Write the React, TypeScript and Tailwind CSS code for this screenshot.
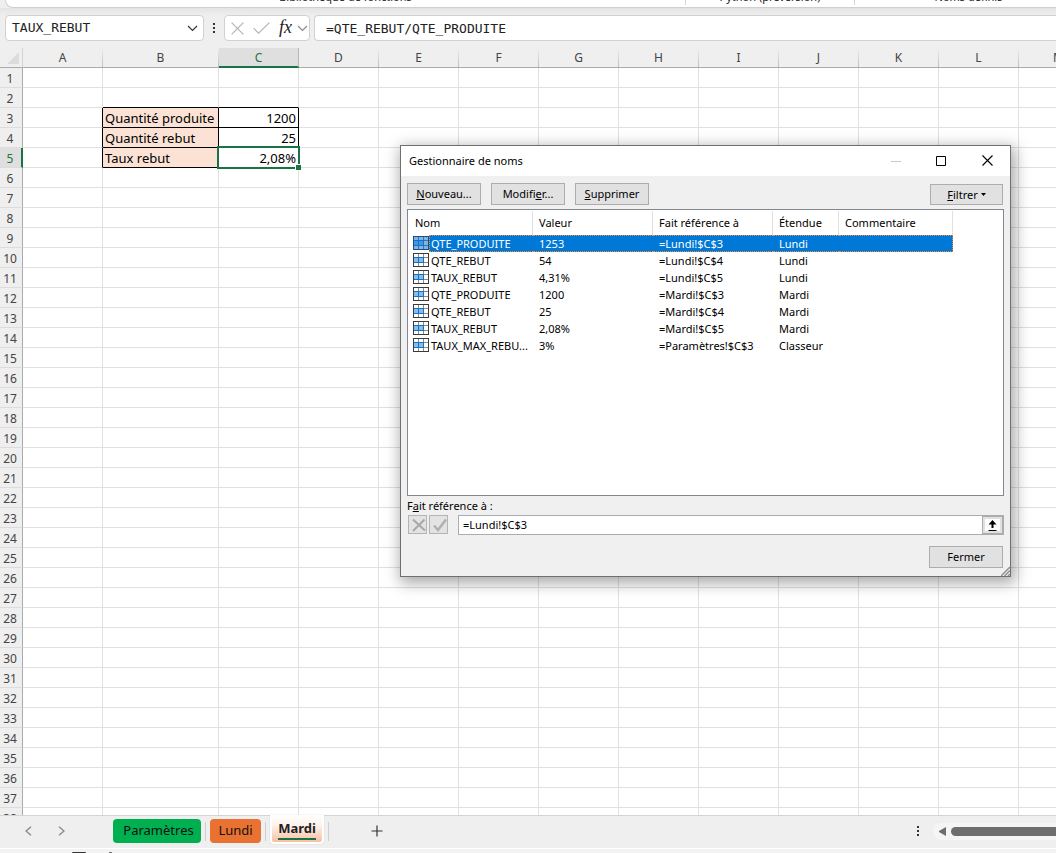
import { useState } from "react";

const columns = [
  { name: "A", width: "w-[80px]" },
  { name: "B", width: "w-[116px]" },
  { name: "C", width: "w-[80px]" },
  ..."DEFGHIJKLM".split("").map((name) => ({ name, width: "w-[80px]" })),
];

const rows = Array.from({ length: 40 }, (_, i) => i + 1);

const cells: Record<string, string> = {
  B3: "Quantité produite",
  C3: "1200",
  B4: "Quantité rebut",
  C4: "25",
  B5: "Taux rebut",
  C5: "2,08%",
};

const names = [
  { nom: "QTE_PRODUITE", valeur: "1253", ref: "=Lundi!$C$3", etendue: "Lundi" },
  { nom: "QTE_REBUT", valeur: "54", ref: "=Lundi!$C$4", etendue: "Lundi" },
  { nom: "TAUX_REBUT", valeur: "4,31%", ref: "=Lundi!$C$5", etendue: "Lundi" },
  { nom: "QTE_PRODUITE", valeur: "1200", ref: "=Mardi!$C$3", etendue: "Mardi" },
  { nom: "QTE_REBUT", valeur: "25", ref: "=Mardi!$C$4", etendue: "Mardi" },
  { nom: "TAUX_REBUT", valeur: "2,08%", ref: "=Mardi!$C$5", etendue: "Mardi" },
  { nom: "TAUX_MAX_REBU...", valeur: "3%", ref: "=Paramètres!$C$3", etendue: "Classeur" },
];

function Chevron({ className = "" }: { className?: string }) {
  return (
    <svg width="11" height="7" viewBox="0 0 11 7" fill="none" stroke="currentColor" strokeWidth="1.2" className={className} aria-hidden="true">
      <path d="M1 1l4.5 4.5L10 1" />
    </svg>
  );
}

function Dots() {
  return (
    <svg width="2" height="10" viewBox="0 0 2 10" fill="#333" shapeRendering="crispEdges" aria-hidden="true">
      <path d="M0 0h2v2H0zM0 4h2v2H0zM0 8h2v2H0z" />
    </svg>
  );
}

function Ribbon() {
  return (
    <div className="ml-[5px] flex h-[8px] shrink-0 items-end overflow-hidden rounded-bl-lg border-b border-l border-[#cfcfcf] bg-white pb-[2px] text-[11px] leading-4 text-[#222]">
      <div className="w-[679px] shrink-0 text-center">Bibliothèque de fonctions</div>
      <div className="w-[170px] shrink-0 border-x border-[#d6d6d6] text-center">Python (préversion)</div>
      <div className="w-[227px] shrink-0 text-center">Noms définis</div>
    </div>
  );
}

function FormulaBar() {
  return (
    <div className="flex h-[40px] shrink-0 items-center bg-gradient-to-b from-[#e4e4e4] via-[#efefef] via-20% to-[#efefef] pl-[5px] font-['DejaVu_Sans_Mono',monospace] text-[13px]">
      <div className="flex h-[26px] w-[199px] items-center rounded border border-[#d1d1d1] bg-white pr-[5px] pl-[6px]">
        <input aria-label="Zone de nom" defaultValue="TAUX_REBUT" className="min-w-0 flex-1 text-[#222] outline-none" />
        <button type="button" aria-label="Ouvrir la liste des noms" className="text-[#333]">
          <Chevron />
        </button>
      </div>
      <div className="flex w-[20px] justify-center">
        <Dots />
      </div>
      <div className="flex h-[26px] w-[86px] items-center rounded border border-[#d1d1d1] bg-white pr-px pl-[6px]">
        <button type="button" aria-label="Annuler" className="text-[#b4b4b4]">
          <svg width="13" height="13" viewBox="0 0 13 13" fill="none" stroke="currentColor" strokeWidth="1.2">
            <path d="M.6.6l11.8 11.8M12.4.6L.6 12.4" />
          </svg>
        </button>
        <button type="button" aria-label="Entrer" className="ml-[9px] text-[#b4b4b4]">
          <svg width="17" height="12" viewBox="0 0 17 12" fill="none" stroke="currentColor" strokeWidth="1.2">
            <path d="M.6 6.2l5 5L16.4.6" />
          </svg>
        </button>
        <button type="button" aria-label="Insérer une fonction" className="ml-[9px] pb-[2px] font-['Liberation_Serif',serif] text-lg leading-5 text-[#222] italic">
          fx
        </button>
        <button type="button" aria-label="Options de fonction" className="ml-auto text-[#8a8a8a]">
          <Chevron />
        </button>
      </div>
      <input
        aria-label="Barre de formule"
        defaultValue="=QTE_REBUT/QTE_PRODUITE"
        className="ml-[4px] h-[26px] min-w-0 flex-1 rounded-l border border-r-0 border-[#d1d1d1] bg-white pl-[11px] text-[#222] outline-none"
      />
    </div>
  );
}

function cellStyle(id: string) {
  const black = "border-black bg-clip-padding";
  switch (id) {
    case "B2":
    case "C2":
      return "border-r-[#e0e0e0] border-b-black";
    case "A3":
    case "A4":
    case "A5":
      return "border-r-black border-b-[#e0e0e0]";
    case "B3":
    case "B4":
    case "B5":
      return `${black} bg-[#fbe2d5] pl-[2px]`;
    case "C3":
    case "C4":
      return `${black} pr-[2px] text-right`;
    case "C5":
      return `${black} relative z-10 pr-[2px] text-right`;
    default:
      return "border-[#e0e0e0]";
  }
}

function Sheet() {
  return (
    <div className="min-h-0 flex-1 overflow-hidden bg-white">
      <table className="w-[1099px] table-fixed border-separate border-spacing-0 text-xs leading-5">
        <thead>
          <tr className="h-[20px]">
            <th className="h-[20px] w-[23px] border-r border-b border-r-[#d4d4d4] border-b-[#ababab] bg-[#efefef] p-0">
              <svg width="12" height="12" viewBox="0 0 12 12" className="ml-[7px]" aria-hidden="true">
                <path d="M12 0v12H0z" fill="#dcdcdc" />
              </svg>
            </th>
            {columns.map((c) => (
              <th
                key={c.name}
                scope="col"
                className={`${c.width} p-0 font-normal ${
                  c.name === "C" ? "border-r border-b-2 border-r-[#b5b5b5] border-b-[#1a7343] bg-[#dfdfdf] text-[#217346]" : "border-b border-[#ababab] bg-[#efefef] text-[#444]"
                }`}
              >
                <div className={c.name === "C" ? "h-[18px]" : "flex h-[19px]"}>
                  <span className="flex-1">{c.name}</span>
                  {c.name !== "C" && <span className="w-px bg-gradient-to-b from-[#efefef] to-[#bdbdbd]" />}
                </div>
              </th>
            ))}
          </tr>
        </thead>
        <tbody>
          {rows.map((r) => (
            <tr key={r} className="h-[20px]">
              <th
                scope="row"
                className={`h-[20px] border-b border-[#dcdcdc] p-0 text-center font-normal ${
                  r === 5 ? "border-r-2 border-r-[#1a7343] bg-[#dfdfdf] text-[#217346]" : "border-r border-r-[#ababab] bg-[#efefef] pr-px text-[#444]"
                }`}
              >
                <span className="block h-[19px] pr-px leading-[22px]">{r}</span>
              </th>
              {columns.map((c) => {
                const id = c.name + r;
                return (
                  <td key={c.name} className={`border-r border-b p-0 text-[13px] text-black ${cellStyle(id)}`}>
                    {cells[id] && <span className="block h-[19px] leading-[20px] whitespace-nowrap">{cells[id]}</span>}
                    {id === "C5" && (
                      <span className="absolute -inset-[2px] border-2 border-[#1a7343]">
                        <span className="absolute -right-[3px] -bottom-[3px] size-[6px] border-t border-l border-white bg-[#1a7343]" />
                      </span>
                    )}
                  </td>
                );
              })}
            </tr>
          ))}
        </tbody>
      </table>
    </div>
  );
}

function SheetTabs() {
  return (
    <div className="flex h-[33px] shrink-0 items-start border-t border-[#d4d4d4] bg-[#efefef] text-[13px]">
      <div className="flex h-[30px] w-[113px] shrink-0 items-center gap-[26px] pl-[25px] text-[#8a8a8a]">
        <button type="button" aria-label="Feuille précédente">
          <svg width="7" height="10" viewBox="0 0 7 10" fill="none" stroke="currentColor" strokeWidth="1.4"><path d="M6 .7L1 5l5 4.3" /></svg>
        </button>
        <button type="button" aria-label="Feuille suivante">
          <svg width="7" height="10" viewBox="0 0 7 10" fill="none" stroke="currentColor" strokeWidth="1.4"><path d="M1 .7L6 5 1 9.3" /></svg>
        </button>
      </div>
      <button type="button" className="mt-[3px] h-[24px] w-[88px] rounded bg-[#00b050] pl-[3px] text-[#111]">Paramètres</button>
      <span className="mx-[4px] mt-[6px] h-[19px] w-px bg-[#cfcfcf]" />
      <button type="button" className="mt-[3px] h-[24px] w-[51px] rounded bg-[#e97132] text-[#111]">Lundi</button>
      <span className="mx-[4px] mt-[6px] h-[19px] w-px bg-[#cfcfcf]" />
      <button type="button" className="-mt-px h-[29px] w-[54px] rounded-b border-2 border-t-0 border-white bg-gradient-to-b from-white via-[#fdf1ea] via-40% to-[#f6bfa2] px-[6px] font-bold text-[#222] shadow-[0_0_1px_#aaa]">
        <span className="block border-b-2 border-[#1a7343] leading-[20px]">Mardi</span>
      </button>
      <span className="mt-[6px] ml-[4px] h-[19px] w-px bg-[#cfcfcf]" />
      <button type="button" aria-label="Nouvelle feuille" className="mt-[9px] ml-[42px]">
        <svg width="12" height="12" viewBox="0 0 12 12" stroke="#333" strokeWidth="1.2"><path d="M6 .5v11M.5 6h11" /></svg>
      </button>
      <div className="ml-auto flex h-[30px] w-[139px] items-center">
        <Dots />
        <div className="ml-[14px] flex h-[17px] flex-1 items-center gap-[5px] rounded-l-lg bg-[#f5f5f5] pl-[6px]">
          <svg width="7" height="9" viewBox="0 0 7 9" fill="#6e6e6e" aria-hidden="true"><path d="M7 0v9L0 5V4z" /></svg>
          <div className="h-[9px] flex-1 rounded-l-full bg-[#6e6e6e]" />
        </div>
      </div>
    </div>
  );
}

function StatusBar() {
  return (
    <div className="flex h-[5px] shrink-0 gap-[22px] overflow-hidden border-t border-white bg-[#f3f3f3] pt-[3px] pl-[72px]">
      <svg width="14" height="6" viewBox="0 0 14 6" fill="none" stroke="#333" aria-hidden="true"><path d="M.5 6V.5h13V6" /></svg>
      <svg width="5" height="5" viewBox="0 0 5 5" fill="none" stroke="#333" aria-hidden="true"><circle cx="2.5" cy="2.5" r="2" /></svg>
    </div>
  );
}

function RangeIcon({ selected }: { selected: boolean }) {
  const frame = selected ? "#1b4f80" : "#3b3b3b";
  const line = selected ? "#2f78b7" : "#8a8a8a";
  const back = selected ? "#7fb5e6" : "#fff";
  const fill = selected ? "#3d98e6" : "#83beec";
  return (
    <svg width="16" height="14" viewBox="0 0 16 14" shapeRendering="crispEdges" aria-hidden="true" className="mt-px shrink-0">
      <path fill={frame} d="M0 0h16v14H0z" />
      <path fill={back} d="M1 1h14v12H1z" />
      <path fill={line} d="M1 4h14v1H1zM1 9h14v1H1zM5 1h1v12H5zM10 1h1v12h-1z" />
      <path fill={fill} d="M1 5h9v4H1z" />
      <path fill="#1a6fc0" d="M1 4h10v1H1zM1 9h10v1H1zM5 5h1v4H5zM10 5h1v4h-1z" />
    </svg>
  );
}

const dialogButton = "border border-[#adadad] bg-[#e1e1e1] text-center leading-[18px] text-black";
const headCell = "h-[24px] border-r border-[#e0e0e0] bg-clip-padding py-0 pr-0 text-left font-normal";

function NameManager() {
  const [selected, setSelected] = useState(0);
  return (
    <section
      role="dialog"
      aria-labelledby="dialog-title"
      className="absolute top-[145px] left-[400px] w-[611px] border border-[#6f6f6f] bg-[#f0f0f0] text-[11px] leading-4 text-black shadow-[2px_4px_14px_2px_rgba(0,0,0,0.35)]"
    >
      <header className="flex h-[30px] items-center bg-white pr-[17px] pb-px pl-[8px]">
        <h2 id="dialog-title" className="flex-1">Gestionnaire de noms</h2>
        <button type="button" aria-label="Réduire" disabled className="mr-[35px]">
          <svg width="10" height="10" viewBox="0 0 10 10" shapeRendering="crispEdges"><path d="M0 5h10v1H0z" fill="#c8c8c8" /></svg>
        </button>
        <button type="button" aria-label="Agrandir" className="mr-[36px]">
          <svg width="10" height="10" viewBox="0 0 10 10" fill="none" stroke="#000"><path d="M.5.5h9v9h-9z" /></svg>
        </button>
        <button type="button" aria-label="Fermer la fenêtre">
          <svg width="11" height="11" viewBox="0 0 11 11" fill="none" stroke="#000" strokeWidth="1.1"><path d="M.5.5l10 10M10.5.5l-10 10" /></svg>
        </button>
      </header>
      <div className="px-[6px] pt-[7px] pb-[8px]">
        <div className="flex items-start gap-[10px] pr-px">
          <button type="button" className={`h-[22px] w-[74px] ${dialogButton}`}><u>N</u>ouveau...</button>
          <button type="button" className={`h-[22px] w-[74px] ${dialogButton}`}>Modifi<u>e</u>r...</button>
          <button type="button" className={`h-[22px] w-[74px] ${dialogButton}`}><u>S</u>upprimer</button>
          <button type="button" className={`mt-px ml-auto flex h-[21px] w-[73px] items-center justify-center gap-[3px] ${dialogButton}`}>
            <span><u>F</u>iltrer</span>
            <svg width="5" height="3" viewBox="0 0 5 3" aria-hidden="true"><path d="M0 0h5L2.500 3z" /></svg>
          </button>
        </div>
        <div className="mt-[4px] h-[287px] border border-[#828790] bg-white pt-px">
          <table className="w-[545px] table-fixed border-separate border-spacing-0">
            <thead>
              <tr>
                <th className={`w-[125px] pl-[7px] ${headCell}`}>Nom</th>
                <th className={`w-[120px] pl-[6px] ${headCell}`}>Valeur</th>
                <th className={`w-[120px] pl-[6px] ${headCell}`}>Fait référence à</th>
                <th className={`w-[66px] pl-[6px] ${headCell}`}>Étendue</th>
                <th className={`w-[114px] pl-[6px] ${headCell}`}>Commentaire</th>
              </tr>
            </thead>
            <tbody>
              {names.map((n, i) => {
                const on = i === selected;
                const td = `h-[17px] p-0 pl-[6px] ${on ? "border-y border-dotted border-[#ff8728] bg-[#0078d7] leading-[15px] text-white" : "leading-[17px]"}`;
                return (
                  <tr key={i} onClick={() => setSelected(i)}>
                    <td className="h-[17px] p-0 pl-[5px]">
                      <div className="flex h-[17px] items-start">
                        <RangeIcon selected={on} />
                        <span
                          className={`h-[17px] flex-1 whitespace-nowrap ${
                            on ? "border border-r-0 border-dotted border-[#ff8728] bg-[#0078d7] pl-px leading-[15px] text-white" : "pl-[2px] leading-[17px]"
                          }`}
                        >
                          {n.nom}
                        </span>
                      </div>
                    </td>
                    <td className={td}>{n.valeur}</td>
                    <td className={td}>{n.ref}</td>
                    <td className={td}>{n.etendue}</td>
                    <td className={`${td} ${on ? "border-r" : ""}`} />
                  </tr>
                );
              })}
            </tbody>
          </table>
        </div>
        <label htmlFor="refers-to" className="mt-[2px] block leading-4">F<u>a</u>it référence à :</label>
        <div className="mt-px flex items-start">
          <div className="flex gap-[2px] pl-px">
            <button type="button" aria-label="Annuler la référence" disabled className="flex size-[19px] items-center justify-end border border-[#b4b4b4] bg-[#e3e3e3]">
              <svg width="14" height="14" viewBox="0 0 14 14" fill="none" stroke="#a8a8a8" strokeWidth="2"><path d="M1 1.500L13 12.500M12.500 1.500L1 13" /></svg>
            </button>
            <button type="button" aria-label="Valider la référence" disabled className="flex size-[19px] items-center justify-end border border-[#b4b4b4] bg-[#e3e3e3]">
              <svg width="14" height="14" viewBox="0 0 14 14" fill="none" stroke="#b0b0b0" strokeWidth="2.400"><path d="M1 7.500L5 12 13 1.500" /></svg>
            </button>
          </div>
          <div className="ml-[10px] flex h-[20px] flex-1 border border-[#ababb3] bg-white">
            <input id="refers-to" key={selected} defaultValue={names[selected].ref} className="min-w-0 flex-1 pl-[4px] outline-none" />
            <button type="button" aria-label="Réduire la boîte de dialogue" className="flex w-[21px] items-center justify-center border border-[#adadad] bg-white outline-2 -outline-offset-3 outline-[#e1e1e1]">
              <svg width="9" height="11" viewBox="0 0 9 11" fill="#000"><path d="M4.500 0L8.500 4.500H5.500V8H3.500V4.500H.500zM0.500 10h8V11h-8z" /></svg>
            </button>
          </div>
        </div>
        <div className="mt-[11px] flex justify-end pr-px">
          <button type="button" className={`h-[22px] w-[74px] ${dialogButton}`}>Fermer</button>
        </div>
      </div>
      <svg width="9" height="9" viewBox="0 0 9 9" stroke="#8f8f8f" strokeWidth="1.500" className="absolute right-0 bottom-0" aria-hidden="true">
        <path d="M0 9L9 0M3.500 9L9 3.500M7 9l2-2" />
      </svg>
    </section>
  );
}

export default function App() {
  return (
    <main className="relative flex h-screen flex-col overflow-hidden bg-[#efefef] font-['Noto_Sans',sans-serif]">
      <Ribbon />
      <FormulaBar />
      <Sheet />
      <SheetTabs />
      <StatusBar />
      <NameManager />
    </main>
  );
}
